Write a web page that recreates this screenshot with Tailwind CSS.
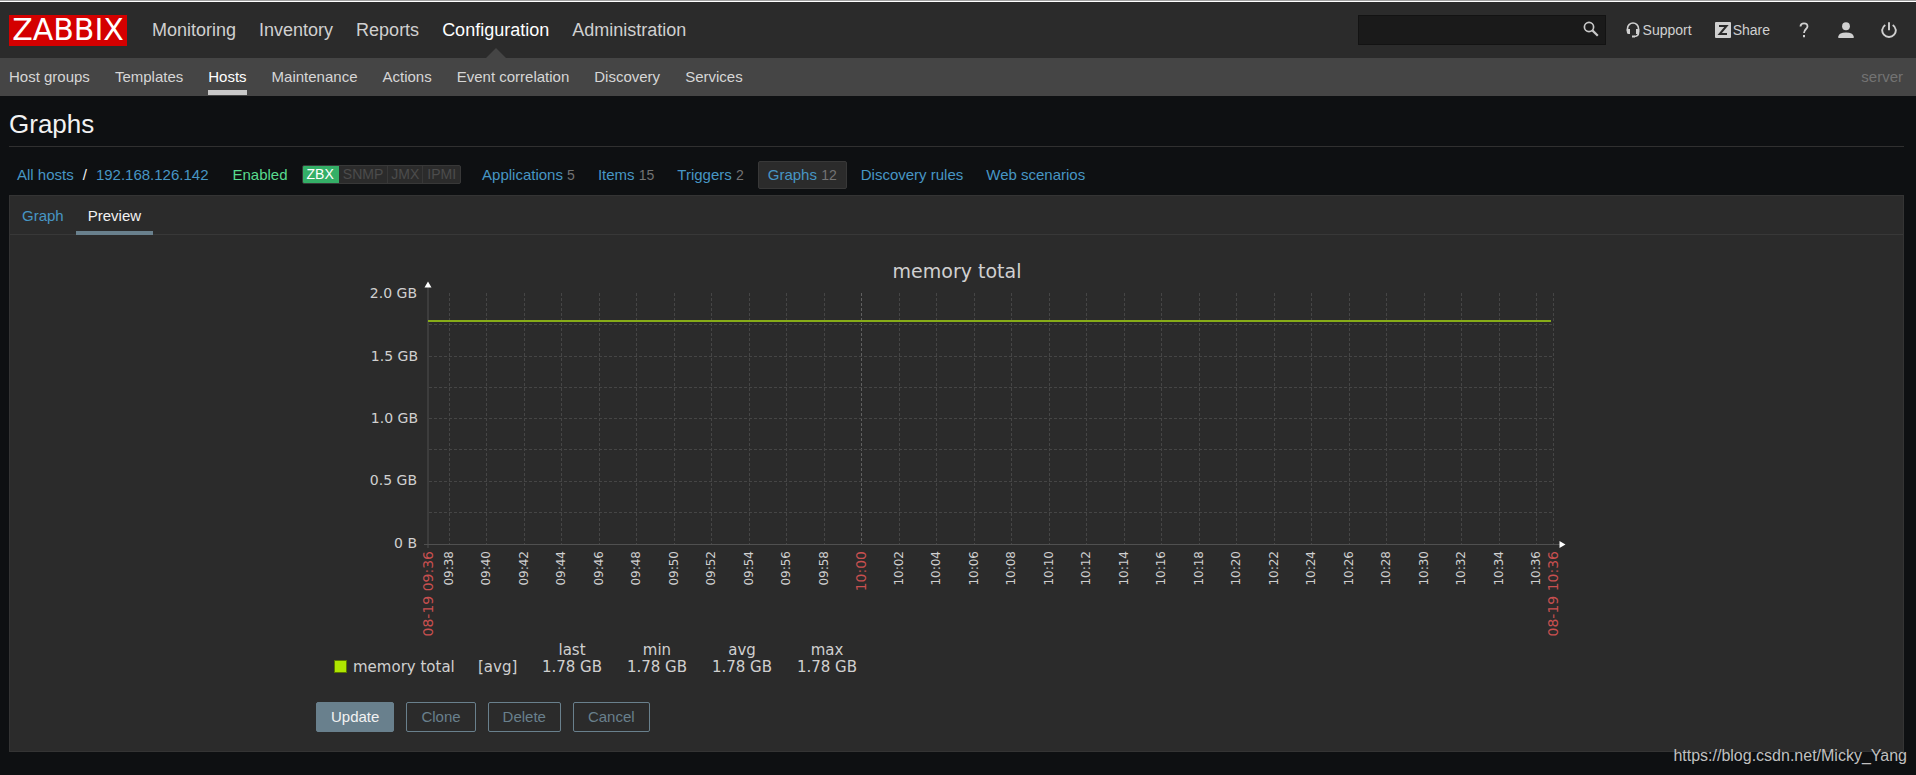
<!DOCTYPE html>
<html lang="en">
<head>
  <meta charset="UTF-8" />
  <title>Configuration of graphs</title>
  <meta name="viewport" content="width=device-width, initial-scale=1.0" />
  <script src="https://cdn.jsdelivr.net/npm/@tailwindcss/browser@4"></script>
</head>
<body class="relative min-h-screen bg-[#0e1012] text-[15px] leading-5 text-[#f2f2f2] font-['Liberation_Sans',Arial,sans-serif]">

  <header class="border-t border-[#a0a0a0]">
    <div class="flex h-[57px] items-center border-t border-white bg-[#2b2b2b] pl-[9px] pr-[19px]">
      <a href="#" class="flex h-[31px] w-[118px] items-center justify-center bg-[#d40000] text-[30px] leading-none text-white font-['DejaVu_Sans',sans-serif]">ZABBIX</a>
      <nav class="flex h-full gap-[23px] pl-[25px] text-lg text-[#d0d0d0]">
        <a href="#" class="flex items-center">Monitoring</a>
        <a href="#" class="flex items-center">Inventory</a>
        <a href="#" class="flex items-center">Reports</a>
        <a href="#" class="relative flex items-center text-white">Configuration
          <span class="absolute bottom-0 left-1/2 -translate-x-1/2 border-x-10 border-b-10 border-x-transparent border-b-[#454545]"></span>
        </a>
        <a href="#" class="flex items-center">Administration</a>
      </nav>

      <form class="relative ml-auto">
        <input type="text" aria-label="Search" class="block h-[30px] w-[248px] border border-[#131313] bg-[#1a1a1a] pl-2 pr-8 outline-none" />
        <button type="button" aria-label="Search" class="absolute right-[7px] top-1.5 text-[#c8c8c8]">
          <svg class="size-4" viewBox="0 0 16 16" fill="none" stroke="currentColor"><circle cx="6" cy="6" r="4.6" stroke-width="1.7" /><path d="M9.4 9.4l5.400 5.400" stroke-width="2.2" /></svg>
        </button>
      </form>

      <div class="flex items-center pl-5 text-sm text-[#d0d0d0]">
        <a href="#" class="flex items-center gap-[3px]">
          <svg class="h-4 w-[14px]" viewBox="0 0 14 16" fill="none" stroke="currentColor"><path d="M1.500 9V6.500a5.500 5.500 0 0 1 11 0V11q0 3-4 3.500" stroke-width="1.600" /><path d="M.7 7H4v5H2.500Q.7 12 .7 9.500zM13.300 7H10v5h1.500q1.800 0 1.800-2.500zM6 13.500h3v2H6z" fill="currentColor" stroke="none" /></svg>
          Support
        </a>
        <a href="#" class="ml-[23px] flex items-center gap-0.5">
          <svg class="size-4" viewBox="0 0 16 16"><rect width="16" height="16" rx="1" fill="currentColor" /><path d="M4 4h7.500L4.700 12H12" fill="none" stroke="#2b2b2b" stroke-width="2" /></svg>
          Share
        </a>
        <a href="#" aria-label="Help" class="ml-[29px]">
          <svg class="h-4 w-[10px]" viewBox="0 0 10 16" fill="none" stroke="currentColor" stroke-width="1.800"><path d="M1.500 4.500Q1.500 1.400 5 1.400T8.500 4.500C8.500 7 5 7.200 5 11" /><path d="M5 13v2.200" stroke-width="2" /></svg>
        </a>
        <a href="#" aria-label="User profile" class="ml-[29px]">
          <svg class="size-4" viewBox="0 0 16 16" fill="currentColor"><ellipse cx="8" cy="4.200" rx="3.900" ry="4" /><path d="M.3 16v-1.500Q1 10.500 8 10.500t7.700 4V16z" /></svg>
        </a>
        <a href="#" aria-label="Sign out" class="ml-[27px]">
          <svg class="size-4" viewBox="0 0 16 16" fill="none" stroke="currentColor" stroke-width="1.900"><path d="M4.300 3a6.800 6.500 0 1 0 7.400 0M8 .3v8" /></svg>
        </a>
      </div>
    </div>

    <nav class="flex h-[38px] gap-[25px] bg-[#454545] pl-[9px] pr-[13px] text-[#d6d6d6]">
      <a href="#" class="pt-[9px]">Host groups</a>
      <a href="#" class="pt-[9px]">Templates</a>
      <a href="#" class="mb-px border-b-5 border-[#c8c8c8] pt-[9px] text-white">Hosts</a>
      <a href="#" class="pt-[9px]">Maintenance</a>
      <a href="#" class="pt-[9px]">Actions</a>
      <a href="#" class="pt-[9px]">Event correlation</a>
      <a href="#" class="pt-[9px]">Discovery</a>
      <a href="#" class="pt-[9px]">Services</a>
      <span class="ml-auto pt-[9px] text-[#737373]">server</span>
    </nav>
  </header>

  <main class="pl-[9px] pr-3">
    <h1 class="border-b border-[#303030] pb-1.5 pt-[13px] text-[26px] leading-[31px]">Graphs</h1>

    <div class="flex h-12 items-center pl-2 pt-[7px] text-[#4796c4]">
      <a href="#">All hosts</a>
      <span class="px-[9px] text-[#f2f2f2]">/</span>
      <a href="#">192.168.126.142</a>
      <span class="pl-6 text-[#59db8f]">Enabled</span>
      <span class="ml-[14px] flex h-[19px] overflow-hidden rounded-xs border border-[#383838] bg-[#2b2b2b] text-sm leading-[17px] text-[#4c4c4c]">
        <span class="-m-px bg-[#34af67] px-[5px] pt-px text-white">ZBX</span>
        <span class="border-r border-[#383838] px-1 pl-[5px]">SNMP</span>
        <span class="border-r border-[#383838] px-[3px]">JMX</span>
        <span class="px-1">IPMI</span>
      </span>
      <div class="flex items-center gap-[5px] pl-3 text-[#737373]">
        <span class="px-[9px]"><a href="#" class="text-[#4796c4]">Applications</a> <span class="text-sm">5</span></span>
        <span class="px-[9px]"><a href="#" class="text-[#4796c4]">Items</a> <span class="text-sm">15</span></span>
        <span class="px-[9px]"><a href="#" class="text-[#4796c4]">Triggers</a> <span class="text-sm">2</span></span>
        <span class="rounded-xs border border-[#383838] bg-[#2b2b2b] px-[9px] py-[3px]"><a href="#" class="text-[#4796c4]">Graphs</a> <span class="text-sm">12</span></span>
        <a href="#" class="px-[9px] text-[#4796c4]">Discovery rules</a>
        <a href="#" class="px-[9px] text-[#4796c4]">Web scenarios</a>
      </div>
    </div>

    <section class="border border-[#343434] bg-[#2b2b2b] pb-[19px]">
      <div class="flex h-[39px] border-b border-[#383838]">
        <a href="#" class="px-3 pt-2.5 text-[#4796c4]">Graph</a>
        <a href="#" class="-mb-px border-b-4 border-[#69808d] px-3 pt-2.5">Preview</a>
      </div>

      <svg id="graph" class="mx-auto block h-[451px] w-[1289px] font-['DejaVu_Sans',sans-serif]" viewBox="312 235 1289 451" fill="#d0d0d0" role="img" aria-label="memory total">
        <text x="957" y="278" text-anchor="middle" class="text-[19px]">memory total</text>
        <g id="grid" stroke="#454545" stroke-width="1" stroke-dasharray="3 2"></g>
        <path d="M428 287V548M424 544.500H1560" fill="none" stroke="#505050" stroke-width="1" />
        <path d="M424.500 287.500l3.500-6 3.500 6zM1559.500 541l6 3.500-6 3.500z" fill="#fff" />
        <path d="M428 321H1551" stroke="#87ac18" stroke-width="2" />
        <g class="text-sm" text-anchor="end">
          <text x="417" y="298">2.0 GB</text>
          <text x="418" y="361">1.5 GB</text>
          <text x="418" y="423">1.0 GB</text>
          <text x="417" y="485">0.5 GB</text>
          <text x="417" y="548">0 B</text>
        </g>
        <g id="times" text-anchor="end"></g>
        <rect x="334.500" y="660.500" width="12" height="12" fill="#aee600" stroke="#5a7800" />
        <g class="text-[15px]">
          <text x="353" y="672">memory total</text>
          <text x="478" y="672">[avg]</text>
        </g>
        <g id="legend" class="text-[15px]" text-anchor="middle"></g>
      </svg>

      <div class="flex gap-3 pl-[306px] pt-4">
        <button type="button" class="h-[30px] rounded-xs border border-[#69808d] bg-[#69808d] px-3.5 text-[#f2f2f2]">Update</button>
        <button type="button" class="h-[30px] rounded-xs border border-[#69808d] px-3.5 text-[#69808d]">Clone</button>
        <button type="button" class="h-[30px] rounded-xs border border-[#69808d] px-3.5 text-[#69808d]">Delete</button>
        <button type="button" class="h-[30px] rounded-xs border border-[#69808d] px-3.5 text-[#69808d]">Cancel</button>
      </div>
    </section>
  </main>

  <span class="absolute bottom-[7px] right-[9px] text-base text-[#c0c0c0]">https://blog.csdn.net/Micky_Yang</span>

  <script>
    const times = document.getElementById('times');
    const grid = document.getElementById('grid');
    let labels = '';
    let lines = '';

    function timeLabel(x, text, red) {
      const cls = red ? 'text-sm fill-[#c85050]' : 'text-xs';
      const base = red ? x + 5 : x + 4;
      return `<text transform="translate(${base} 551) rotate(-90)" class="${cls}">${text}</text>`;
    }

    // one mark every two minutes, 09:38 to 10:36
    for (let i = 0; i < 30; i++) {
      const minutes = 9 * 60 + 38 + i * 2;
      const x = Math.floor(449 + i * 37.5);
      const hour = String(Math.floor(minutes / 60)).padStart(2, '0');
      const min = String(minutes % 60).padStart(2, '0');
      const full = min === '00';
      lines += `<path d="M${x + 0.5} 293V544" class="${full ? 'stroke-[#606060]' : ''}" />`;
      labels += timeLabel(x, `${hour}:${min}`, full);
    }
    lines += '<path d="M1553.5 293V544" />';
    [324, 356, 387, 418, 449, 481, 512].forEach(y => {
      lines += `<path d="M429 ${y + 0.5}H1553" />`;
    });
    labels += timeLabel(428, '08-19 09:36', true) + timeLabel(1553, '08-19 10:36', true);
    grid.innerHTML = lines;
    times.innerHTML = labels;

    document.getElementById('legend').innerHTML = ['last', 'min', 'avg', 'max'].map((name, i) => {
      const x = 572 + i * 85;
      return `<text x="${x}" y="655">${name}</text><text x="${x}" y="672">1.78 GB</text>`;
    }).join('');
  </script>
</body>
</html>
